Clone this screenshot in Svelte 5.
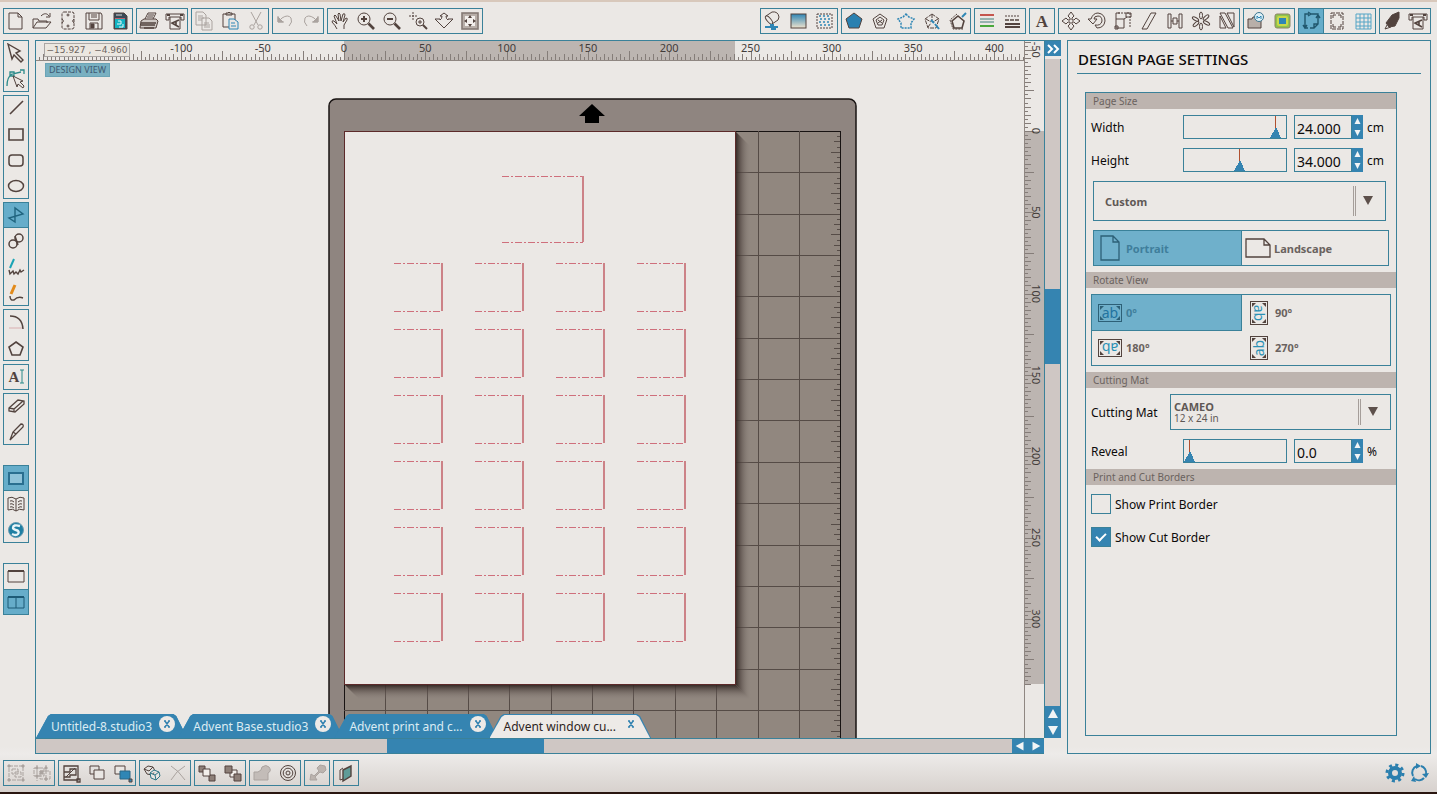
<script lang="ts">
  type Tool = { icon: string; label: string; active?: boolean; disabled?: boolean };

  const on = (icon: string, label: string): Tool => ({ icon, label, active: true });
  const off = (icon: string, label: string): Tool => ({ icon, label, disabled: true });
  const tool = (icon: string, label: string): Tool => ({ icon, label });

  const fileTools: Tool[][] = [
    [tool("page", "New"), tool("folder", "Open"), tool("card", "Import"), tool("floppy", "Save"), tool("sd", "Save to library")],
    [tool("printer", "Print"), tool("cutter", "Send to cutter")],
    [off("copy", "Copy"), tool("paste", "Paste"), off("scissors", "Cut")],
    [off("undo", "Undo"), off("redo", "Redo")],
    [tool("hand", "Pan"), tool("zoomIn", "Zoom in"), tool("zoomOut", "Zoom out"), tool("zoomSel", "Zoom selection"), tool("dragZoom", "Drag zoom"), tool("fit", "Fit to page")],
  ];

  const styleTools: Tool[][] = [
    [tool("fill", "Fill color"), tool("gradient", "Fill gradient"), tool("pattern", "Fill pattern")],
    [tool("pentagon", "Line color"), tool("sketch", "Sketch"), tool("star", "Rhinestones"), tool("trace", "Trace"), tool("offsetPen", "Print and cut")],
    [tool("lineColor", "Line color"), tool("lineStyle", "Line style")],
    [tool("text", "Text style")],
    [tool("move", "Move"), tool("rotate", "Rotate"), tool("scale", "Scale"), tool("shear", "Shear"), tool("align", "Align"), tool("replicate", "Replicate"), tool("nest", "Nesting")],
    [tool("modify", "Modify"), tool("offset", "Offset")],
    [on("pageSetup", "Design page settings"), tool("regMarks", "Registration marks"), tool("grid", "Grid settings")],
    [tool("blade", "Cut settings"), tool("cutter", "Send to cutter")],
  ];

  const drawTools: Tool[][] = [
    [tool("select", "Select"), tool("editPoints", "Edit points")],
    [tool("line", "Line"), tool("rect", "Rectangle"), tool("roundRect", "Rounded rectangle"), tool("ellipse", "Ellipse")],
    [on("polygon", "Polygon"), tool("curve", "Curve"), tool("freehand", "Freehand"), tool("smooth", "Smooth freehand")],
    [tool("arc", "Arc"), tool("regular", "Regular polygon")],
    [tool("addText", "Text")],
    [tool("eraser", "Eraser"), tool("knife", "Knife")],
  ];
  const viewTools: Tool[] = [on("designView", "Design view"), tool("library", "Library"), tool("store", "Store")];
  const splitTools: Tool[] = [tool("single", "Single view"), on("split", "Split view")];

  const objectTools: Tool[][] = [
    [off("group", "Group"), off("ungroup", "Ungroup")],
    [tool("selectAll", "Select all"), tool("deselect", "Deselect"), tool("selectColor", "Select by color")],
    [tool("duplicate", "Duplicate"), off("remove", "Delete")],
    [tool("front", "Bring to front"), tool("back", "Send to back")],
    [off("weld", "Weld"), tool("rings", "Offset")],
    [off("pick", "Pick a color")],
    [tool("sheet", "Layers")],
  ];

  const B = "#2f86b5";
  const penta = "M10 2l8 6-3 9H5L2 8z";
  const lens = `<circle cx="8" cy="8" r="6"/><path stroke-width="2.600" d="M12.500 12.500l5.500 5.500"/>`;
  const icons: Record<string, string> = {
    page: `<path d="M3 2h9l4 4v12H3zM12 2v4h4"/>`,
    folder: `<path d="M1 17V8h5l1 2h8v2M1 17l4-6h14l-5 6zM9 5c3-3 6-3 8 0m1-3v4h-4"/>`,
    card: `<rect x="4" y="1" width="12" height="17" rx="2" stroke-dasharray="3 1"/><path d="M4 8q3 2 0 4m12-4q-3 2 0 4"/><circle cx="10" cy="4" r="1"/><circle cx="10" cy="15" r="1"/>`,
    floppy: `<path d="M2 2h15l1 2v14H2z"/><path d="M5 2v7h10V2M6 18v-6h8v6M7 4h6M7 6h6"/><path fill="currentColor" d="M7 13h3v4H7z"/>`,
    sd: `<path fill="#3a4a57" d="M4 2h10l3 3v13H4z"/><path stroke="#ddd" d="M7 3v2m2-2v2m2-2v2"/><path fill="#12b3c2" stroke="none" d="M5 8h10v9H5z"/><path fill="#c4606c" stroke="none" d="M5 7h10v1H5z"/><path stroke="#e9f6f7" d="M8 10h3v3H7m2 3h4v-3"/>`,
    printer: `<path d="M6 8l3-6h8l-3 6M9 4h6M8 6h6"/><path fill="#cfc9c5" d="M2 10l3-2h12l2 2-2 7H1z"/><path stroke-width="1.600" d="M2 12h15M2 14h14M5 17h10"/>`,
    cutter: `<path d="M1 3h18v6h-3V6H4v3H1zM5 6v12h10V6"/><path stroke-width="2" d="M2 4h3m10 0h3"/><path stroke-width="1.600" d="M14 9l-7 3 7 4m-3-5v3"/>`,
    copy: `<path d="M2 1h7l3 3v10H2zM8 7h7l3 3v9H8zM4 5h5M4 7h6M4 9h4M10 12h5M10 14h6M10 16h6"/>`,
    paste: `<path d="M3 3h12v13H3z"/><path fill="#b9b2ad" d="M6 4V2h2q1-2 2 0h2v2z"/><path stroke="${B}" fill="#e9e6e3" d="M9 8h5l4 3v7H9zM11 12h4M11 15h5"/>`,
    scissors: `<path d="M5 1l7 13M15 1L8 14"/><circle cx="6" cy="16" r="2.200"/><circle cx="14" cy="16" r="2.200"/>`,
    undo: `<path d="M3 5v6h6M3 11l4-4q6-4 9 0 2 4-2 8"/><path fill="currentColor" d="M3 6v5h5z"/>`,
    redo: `<path d="M17 5v6h-6M17 11l-4-4q-6-4-9 0-2 4 2 8"/><path fill="currentColor" d="M17 6v5h-5z"/>`,
    hand: `<path d="M7 18q-2-4-5-7 0-2 2-1l3 3-3-8q1-2 2 0l3 5-1-7q1-2 2 0l1 7 2-7q2-1 2 1l-2 7 3-4q2 0 1 2l-3 5v4"/>`,
    zoomIn: lens + `<path stroke-width="2" d="M5 8h6M8 5v6"/>`,
    zoomOut: lens + `<path stroke-width="2" d="M5 8h6"/>`,
    zoomSel: `<path stroke-dasharray="2 1" d="M5 1v8M1 5h8"/><circle cx="12" cy="11" r="4"/><path d="M10 11h4m-2-2v4"/><path stroke-width="2" d="M15 14l4 4"/>`,
    dragZoom: `<path d="M6 5l4-3 4 3h-2q0 3 2 4v-1h5l-9 9-9-9h5v1q2-1 2-4z"/>`,
    fit: `<rect x="2" y="2" width="16" height="16" fill="#b8afa9" stroke="#857a75" stroke-width="1.600"/><path fill="#f2efec" stroke="none" d="M5 5h10v10H5z"/><path fill="currentColor" stroke="none" d="M10 4l2 3H8zM10 16l2-3H8zM4 10l3-2v4zM16 10l-3-2v4z"/>`,
    fill: `<ellipse cx="6" cy="9" rx="2" ry="5" transform="rotate(-40 6 9)"/><path d="M3 5l6-4q6-1 7 5l-1 3-6 4"/><path stroke="${B}" stroke-width="2" d="M2 16h13M7 14h4M8 18h5"/>`,
    gradient: `<defs><linearGradient id="gr" x2="0" y2="1"><stop stop-color="#2f86b5"/><stop offset="1" stop-color="#efe3cd"/></linearGradient></defs><rect x="2" y="3" width="15" height="14" fill="url(#gr)"/>`,
    pattern: `<rect x="2" y="3" width="15" height="14" stroke-dasharray="2 1"/><path stroke="${B}" stroke-width="1.500" stroke-dasharray="2 2" d="M4 5h12M5 8h12M4 11h12M5 14h12"/>`,
    pentagon: `<path fill="#2a80b0" d="${penta}"/>`,
    sketch: `<path d="M10 3l7 5-3 9H6L3 8z"/><path d="M10 6l4 3-2 5H8L6 9zM8 9l4 3M12 9l-4 3"/>`,
    star: `<path stroke="${B}" stroke-width="1.500" stroke-dasharray="2 1" d="M10 3l3 3 5 2-3 4v5h-5-5v-5L2 8l5-2z"/>`,
    trace: `<path stroke-dasharray="4 1" d="M10 3l7 5-3 9H6L3 8zM10 3v6M4 8l5 3M16 8l-5 3M6 16l3-4"/><path stroke="${B}" stroke-width="2" d="M9 9l3 3m1 1l4 5"/>`,
    offsetPen: `<path stroke-width="1.600" d="M10 5l6 5-2 7H6L4 10z"/><path stroke-dasharray="2 1" d="M9 3L2 9l3 9h10"/><path stroke="${B}" stroke-width="2" d="M14 6l4-4"/>`,
    lineColor: `<path stroke="#c5564e" stroke-width="2" d="M3 4h14"/><path stroke="#427f79" d="M3 8h14M3 11h14"/><path stroke="#4aa83c" stroke-width="2" d="M3 15h14"/>`,
    lineStyle: `<path stroke-dasharray="2 1" d="M2 5h15"/><path stroke-width="1.600" stroke-dasharray="4 1" d="M2 9h15"/><path stroke-width="2" d="M2 13h15M2 16h15"/>`,
    text: `<text x="10" y="16" text-anchor="middle" font-size="17" font-weight="bold" font-family="Liberation Serif, serif" fill="currentColor" stroke="none">A</text>`,
    move: `<path d="M10 1l3 4-2 2v2h2l2-2 4 3-4 3-2-2h-2v2l2 2-3 4-3-4 2-2v-2H7l-2 2-4-3 4-3 2 2h2V7L7 5z"/>`,
    rotate: `<path d="M1 8h3q2-6 7-6 7 1 7 8-1 7-8 7l-2-3q6 1 7-4 0-5-4-5-4 0-4 3h3l-4 5z"/>`,
    scale: `<path stroke-dasharray="2 1" d="M5 2h12v15"/><path d="M3 8h8v9H3zM2 15h3v3H2zM13 2h5v4h-5zM11 8l3-2M3 8V2h4"/>`,
    shear: `<path d="M12 2h5L8 18H3z"/>`,
    align: `<path d="M3 3h3v14H3zM14 3h3v14h-3zM8 7h4v6H8zM6 10h2m4 0h2"/>`,
    replicate: `<ellipse cx="10" cy="4.500" rx="1.500" ry="3.500"/><ellipse cx="10" cy="15.500" rx="1.500" ry="3.500"/><ellipse cx="4.500" cy="8" rx="1.500" ry="3.500" transform="rotate(-60 4.500 8)"/><ellipse cx="15.500" cy="12" rx="1.500" ry="3.500" transform="rotate(-60 15.500 12)"/><ellipse cx="5" cy="13" rx="1.500" ry="3.500" transform="rotate(50 5 13)"/><ellipse cx="15" cy="6.500" rx="1.500" ry="3.500" transform="rotate(50 15 6.500)"/>`,
    nest: `<path d="M3 2h5l8 15h-5zM10 2h7v14zM3 5v12h6z"/>`,
    modify: `<path fill="#b8afa9" d="M2 8h4l1-2h3v3h5v8H2z"/><circle cx="13" cy="6" r="4.500" fill="#dff0f6" stroke="#3b7590"/><path stroke="${B}" d="M11 8V5l2 2 2-2v3"/>`,
    offset: `<rect x="3" y="3" width="15" height="14" rx="2" fill="#8fc44d" stroke="#8c8366"/><rect x="6" y="6" width="9" height="8" rx="1" fill="#2f86b5" stroke="#c9d84a" stroke-width="2"/>`,
    pageSetup: `<path stroke="#20576d" stroke-width="1.400" d="M8 3H4v14h3M10 3h7v10l-4 4H9M17 13h-4v4M7 1l3 2-3 2M15 7l2-3 2 3M2 14l2 3 2-3"/>`,
    regMarks: `<path d="M4 2h12v16H4z" stroke-dasharray="4 1"/><path d="M6 7V4h3M11 4h3v3M6 13v3h3M11 16h3v-3"/>`,
    grid: `<path stroke="#54a5c6" d="M3 3h15v15H3zM7 3v15M11 3v15M15 3v15M3 7h15M3 11h15M3 15h15"/>`,
    blade: `<path fill="currentColor" d="M4 12l6-8 7-3v6l-4 8-6 1z"/><path d="M5 14l-2 4 6-2"/>`,
    select: `<path stroke-width="1.400" d="M2 1l12 7-4 2 7 7-2 2-7-7-2 4z"/>`,
    editPoints: `<path stroke="#2b8a8a" stroke-width="1.300" d="M1 17q0-9 5-12l9-2M4 3h4v4H4zM14 1h4v4"/><path d="M7 7l10 5-3 1 4 4-1 2-5-4-1 3z"/>`,
    line: `<path stroke-width="1.600" d="M4 16L17 3"/>`,
    rect: `<path stroke-width="1.600" d="M3 5h14v11H3z"/>`,
    roundRect: `<rect x="3" y="5" width="14" height="11" rx="3" stroke-width="1.500"/>`,
    ellipse: `<ellipse cx="10" cy="10" rx="7.500" ry="5.500" stroke-width="1.500"/>`,
    polygon: `<path stroke="#20647f" stroke-width="1.400" d="M9 3v14l-6-4L17 9 9 3z"/>`,
    curve: `<circle cx="13" cy="7" r="4" stroke-width="1.500"/><circle cx="7" cy="13" r="4" stroke-width="1.500"/><path stroke-width="1.500" d="M9 5l3 9"/>`,
    freehand: `<path stroke="#1ba4b5" stroke-width="2" d="M8 2L4 11"/><path stroke-width="1.400" d="M3 13l1 4 3-3 1 3 2-2 2 2 2-4 1 2 3-2"/>`,
    smooth: `<path stroke="#e28a1a" stroke-width="3" d="M9 2L5 11"/><path stroke-width="1.400" d="M4 13q0 5 4 4 4-4 9-2"/>`,
    arc: `<path stroke-width="1.500" d="M4 4q12 0 13 13"/><path stroke="#d9aeb0" d="M3 16h13"/>`,
    regular: `<path stroke-width="1.600" d="M10 4l7 5-3 8H6L3 9z"/>`,
    addText: `<text x="8" y="15" text-anchor="middle" font-size="15" font-weight="bold" font-family="Liberation Serif, serif" fill="currentColor" stroke="none">A</text><path stroke="#2b8a8a" d="M14 3h4m-2 0v13m-2 0h4"/>`,
    eraser: `<path stroke-width="1.300" d="M3 12l9-8 6 1v3l-9 8-6-1zM3 12l5 1 9-8M8 13v3"/>`,
    knife: `<path stroke-width="1.300" d="M4 18l3-8 8-8q3 0 2 3l-7 7zM7 10l3 2"/>`,
    designView: `<rect x="3" y="5" width="14" height="11" fill="#8fc3d9" stroke="#2a6f90" stroke-width="2"/>`,
    library: `<path d="M10 5q-4-3-8-1v12q5-2 8 1 3-3 8-1V4q-4-2-8 1zM10 5v12M4 7q2-1 4 1M4 10q2-1 4 1M4 13q2-1 4 1M16 7q-2-1-4 1M16 10q-2-1-4 1M16 13q-2-1-4 1"/>`,
    store: `<circle cx="10" cy="10" r="7.500" fill="#1f7fa3" stroke="#6c9db2"/><path stroke="#e8f4f8" stroke-width="2.400" d="M14 6q-7-2-7 2 0 1 3 2 4 1 2 4-2 2-6 0"/>`,
    single: `<path d="M2 5h16v11H2z"/><path stroke-width="2" d="M2 5h16"/>`,
    split: `<path stroke="#1d5b77" d="M2 5h16v11H2zM10 5v11"/><path stroke="#1d5b77" stroke-width="2" d="M2 5h16"/>`,
    group: `<path d="M3 3h14v14H3zM6 6h6v5H6zM9 9h6v5H9z" stroke-dasharray="4 1"/><path fill="currentColor" d="M2 2h2v2H2zM16 2h2v2h-2zM2 16h2v2H2zM16 16h2v2h-2z"/>`,
    ungroup: `<path d="M2 5h10v8H2zM8 8h10v8H8zM5 2v16M14 2v16" stroke-dasharray="4 1"/><path fill="currentColor" d="M4 4h2v2H4zM13 4h2v2h-2zM4 12h2v2H4zM13 15h2v2h-2zM8 8h3v3H8z"/>`,
    selectAll: `<path stroke-width="1.300" d="M3 3h14v14H3zM3 9h6V6h6v6H9v2H3zM16 16h3v3h-3z"/><path d="M5 14l9-9"/>`,
    deselect: `<path d="M3 3h9v8H3z"/><path fill="#e9e6e3" d="M7 7h10v9H7z"/>`,
    selectColor: `<path fill="#e9e6e3" d="M2 3h10v8H2z"/><path fill="#2f86b5" stroke="#2a6785" d="M7 8h10v8H7z"/><path fill="#2f86b5" d="M16 16h3v3h-3z"/>`,
    duplicate: `<path d="M2 6l4-3 5 1 2 4-3 4-5-1z"/><path d="M2 6l5 2 4-4"/><path stroke="#2c7585" fill="#e9e6e3" d="M8 10l4-3 5 2 1 4-4 4-5-2zM8 10l5 2 4-3m-4 3l1 5"/>`,
    remove: `<path d="M3 3q7 4 14 14M17 3Q8 8 3 17"/>`,
    front: `<path fill="#8d7f78" d="M2 3h6v6H2zM12 12h6v6h-6z"/><path fill="#f3efeb" d="M6 6h7v7H6z"/>`,
    back: `<path fill="#f3efeb" d="M7 7h7v7H7z"/><path fill="#8d7f78" d="M2 3h7v7H2zM11 11h7v7h-7z"/>`,
    weld: `<path fill="#c3bcb8" d="M2 9h4l3-2 1-3q4-3 7 0 3 4-1 6v7H2z"/>`,
    rings: `<circle cx="10" cy="10" r="7.500"/><circle cx="10" cy="10" r="4.800"/><circle cx="10" cy="10" r="2"/>`,
    pick: `<path fill="#bcb4af" d="M3 17l1-6 3 2 5-5-2-3 3-3 5 1 1 4-3 3-3-1-5 5 2 3z"/>`,
    sheet: `<path fill="#5f9c98" stroke-width="1.400" d="M7 7l8-4v10l-8 5z"/><path d="M7 5L4 7v10l3-1"/>`,
  };

  // 1 mm on the ruler is 1.626 px at this zoom level
  const SCALE = 1.626;
  const INCH = 41.35;
  const PAGE_W = 391;
  const PAGE_H = 553;

  function ticks(from: number, to: number) {
    const list = [];
    for (let u = from; u <= to; u += 2.5) {
      list.push({ at: Math.round(u * SCALE), len: u % 25 === 0 ? 9 : u % 5 === 0 ? 6 : 3 });
    }
    return list;
  }

  const hTicks = ticks(-190, 420);
  const vTicks = ticks(-55, 340);
  const hLabels = [-100, -50, 0, 50, 100, 150, 200, 250, 300, 350, 400];
  const vLabels = [-50, 0, 50, 100, 150, 200, 250, 300];

  const gridLines = Array.from({ length: 15 }, (_, i) => Math.round((i + 1) * INCH));
  const matTicks = Array.from({ length: 120 }, (_, i) => ({
    at: Math.round(((i + 1) * INCH) / 8),
    len: i % 4 === 3 ? 9 : i % 2 === 1 ? 6 : 3,
  }));

  const flaps = [{ x: 158, y: 45, w: 81, h: 66 }];
  for (let row = 0; row < 6; row++) {
    for (let col = 0; col < 4; col++) {
      flaps.push({ x: 50 + col * 81, y: 132 + row * 66, w: 48, h: 48 });
    }
  }

  const tabs = ["Untitled-8.studio3", "Advent Base.studio3", "Advent print and c...", "Advent window cu..."];
  let activeTab = $state(3);

  let width = $state(94);
  let height = $state(55);
  let reveal = $state(0);
  let orientation = $state("Portrait");
  let rotation = $state(0);
  let printBorder = $state(false);
  let cutBorder = $state(true);
</script>

{#snippet toolGroup(tools: Tool[])}
  <div class="group">
    {#each tools as t}
      <button class="tool" class:active={t.active} disabled={t.disabled} aria-label={t.label}>
        <svg viewBox="0 0 20 20" width="20" height="20">{@html icons[t.icon]}</svg>
      </button>
    {/each}
  </div>
{/snippet}

{#snippet spinner(name: string)}
  <span class="spinner">
    <button aria-label="Increase {name}"><svg viewBox="0 0 10 10"><path d="M5 2l3 6H2z" /></svg></button>
    <button aria-label="Decrease {name}"><svg viewBox="0 0 10 10"><path d="M5 8l3-6H2z" /></svg></button>
  </span>
{/snippet}

<div class="app">
  <header>
    <div class="bar">
      {#each fileTools as tools}{@render toolGroup(tools)}{/each}
    </div>
    <div class="bar">
      {#each styleTools as tools}{@render toolGroup(tools)}{/each}
    </div>
  </header>

  <main>
    <nav class="rail">
      {#each drawTools as tools}{@render toolGroup(tools)}{/each}
      <div class="rail-part">{@render toolGroup(viewTools)}</div>
      <div class="rail-part">{@render toolGroup(splitTools)}</div>
    </nav>

    <section class="workspace">
      <div class="ruler-h">
        <svg width="100%" height="100%">
          <g transform="translate(308 0)">
            <rect class="extent" x="0" y="0" width={PAGE_W} height="20" />
            {#each hTicks as t}
              <path class="tick" d="M{t.at} 19v-{t.len}" />
            {/each}
            {#each hLabels as n}
              <text x={n * SCALE} y="11">{n}</text>
            {/each}
          </g>
        </svg>
        <output class="coords">−15.927 , −4.960</output>
      </div>

      <div class="ruler-v">
        <svg width="100%" height="100%">
          <g transform="translate(0 90)">
            <rect class="extent" x="0" y="0" width="20" height={PAGE_H} />
            {#each vTicks as t}
              <path class="tick" d="M0 {t.at}h{t.len}" />
            {/each}
            {#each vLabels as n}
              <text transform="translate(7 {n * SCALE}) rotate(90)">{n}</text>
            {/each}
          </g>
        </svg>
      </div>

      <div class="stage">
        <svg width="100%" height="100%">
          <defs>
            <linearGradient id="shade-r"><stop stop-color="#2c201c" /><stop offset="1" stop-color="#8f8580" stop-opacity="0" /></linearGradient>
            <linearGradient id="shade-b" x2="0" y2="1"><stop stop-color="#2c201c" /><stop offset="1" stop-color="#8f8580" stop-opacity="0" /></linearGradient>
          </defs>
          <g transform="translate(308 70)">
            <rect class="mat" x="-15" y="-32" width="527" height="3000" rx="7" />
            <path class="feed" d="M248 -27l13 12h-6v7h-14v-7h-6z" />
            <rect class="mat-area" x="0" y="0" width="496" height="3000" />
            {#each gridLines as at}
              {#if at < 490}<path class="mat-line" d="M{at} 0V3000" />{/if}
              <path class="mat-line" d="M0 {at}H496" />
            {/each}
            {#each matTicks as t}
              <path class="mat-tick" d="M496 {t.at}h-{t.len}" />
            {/each}
            <path class="shade" fill="url(#shade-r)" d="M391 0l16 16v553l-16-16z" />
            <path class="shade" fill="url(#shade-b)" d="M0 553l16 16h391l-16-16z" />
            <rect class="paper" x="0" y="0" width={PAGE_W} height={PAGE_H} />
            {#each flaps as f}
              <path class="fold" d="M{f.x} {f.y}h{f.w}M{f.x} {f.y + f.h}h{f.w}" />
              <path class="cut" d="M{f.x + f.w} {f.y}v{f.h}" />
            {/each}
          </g>
        </svg>
        <span class="badge">DESIGN VIEW</span>
        <div class="tabs">
          {#each tabs as name, i}
            <div class="tab" class:current={i === activeTab}>
              <button class="name" onclick={() => (activeTab = i)}>{name}</button>
              <button class="close" aria-label="Close {name}">
                <svg viewBox="0 0 16 16" width="16" height="16"><path d="M6 5l4 6M10 5l-4 6M5 5h2m2 0h2M5 11h2m2 0h2" /></svg>
              </button>
            </div>
          {/each}
        </div>
      </div>

      <div class="scroll-v">
        <button class="collapse" aria-label="Collapse panel">
          <svg viewBox="0 0 16 16" width="16" height="16"><path d="M3 4l4 4-4 4M9 4l4 4-4 4" /></svg>
        </button>
        <div class="track-v"><div class="thumb-v"></div></div>
        <button class="arrow" aria-label="Scroll up"><svg viewBox="0 0 16 16"><path d="M8 3l5 9H3z" /></svg></button>
        <button class="arrow" aria-label="Scroll down"><svg viewBox="0 0 16 16"><path d="M8 13l5-9H3z" /></svg></button>
      </div>

      <div class="scroll-h">
        <div class="track-h"><div class="thumb-h"></div></div>
        <button class="arrow" aria-label="Scroll left"><svg viewBox="0 0 16 16"><path d="M3 8l9-5v10z" /></svg></button>
        <button class="arrow" aria-label="Scroll right"><svg viewBox="0 0 16 16"><path d="M13 8L4 3v10z" /></svg></button>
      </div>
    </section>

    <aside class="panel">
      <h1>DESIGN PAGE SETTINGS</h1>
      <div class="settings">
        <h2>Page Size</h2>
        <div class="body">
          <div class="row">
            <label for="width">Width</label>
            <input type="range" aria-label="Width slider" bind:value={width} />
            <input id="width" type="text" value="24.000" />
            {@render spinner("width")}
            <span>cm</span>
          </div>
          <div class="row">
            <label for="height">Height</label>
            <input type="range" aria-label="Height slider" bind:value={height} />
            <input id="height" type="text" value="34.000" />
            {@render spinner("height")}
            <span>cm</span>
          </div>
          <div class="picker size">
            <select aria-label="Page size">
              <option>Custom</option>
            </select>
          </div>
          <div class="choices">
            <button class:chosen={orientation === "Portrait"} onclick={() => (orientation = "Portrait")}>
              <svg viewBox="0 0 20 26" width="20" height="26"><path d="M1 1h12l6 6v18H1zM13 1v6h6" /></svg>
              Portrait
            </button>
            <button class:chosen={orientation === "Landscape"} onclick={() => (orientation = "Landscape")}>
              <svg viewBox="0 0 26 20" width="26" height="20"><path d="M1 1h18l6 6v12H1zM19 1v6h6" /></svg>
              Landscape
            </button>
          </div>
        </div>

        <h2>Rotate View</h2>
        <div class="body">
          <div class="rotations">
            {#each [0, 90, 180, 270] as deg}
              <button class:chosen={rotation === deg} onclick={() => (rotation = deg)}>
                <svg viewBox="-12 -12 24 24" width="24" height="24">
                  <g transform="rotate({deg === 270 ? -90 : deg})">
                    <rect x="-11.500" y="-8.500" width="23" height="17" />
                    <path d="M-10 -3v-4h4zM10 -3v-4h-4zM-10 3v4h4zM10 3v4h-4z" />
                    <text y="5" text-anchor="middle">ab</text>
                  </g>
                </svg>
                {deg}°
              </button>
            {/each}
          </div>
        </div>

        <h2>Cutting Mat</h2>
        <div class="body">
          <div class="row mat-row">
            <label for="mat">Cutting Mat</label>
            <div class="picker machine">
              <select id="mat">
                <option>CAMEO</option>
              </select>
              <small>12 x 24 in</small>
            </div>
          </div>
          <div class="row">
            <label for="reveal">Reveal</label>
            <input type="range" aria-label="Reveal slider" bind:value={reveal} />
            <input id="reveal" type="text" value="0.0" />
            {@render spinner("reveal")}
            <span>%</span>
          </div>
        </div>

        <h2>Print and Cut Borders</h2>
        <div class="body checks">
          <label><input type="checkbox" bind:checked={printBorder} />Show Print Border</label>
          <label><input type="checkbox" bind:checked={cutBorder} />Show Cut Border</label>
        </div>
      </div>
    </aside>
  </main>

  <footer>
    <div class="bar">
      {#each objectTools as tools}{@render toolGroup(tools)}{/each}
    </div>
    <div class="prefs">
      <button aria-label="Preferences">
        <svg viewBox="0 0 20 20" width="20" height="20">
          <circle cx="10" cy="10" r="5" stroke-width="4" />
          <circle cx="10" cy="10" r="8" stroke-width="3" stroke-dasharray="3 3.283" />
        </svg>
      </button>
      <button aria-label="Sync">
        <svg viewBox="0 0 20 20" width="20" height="20">
          <path stroke-width="2" d="M4 13A7 7 0 0 1 8 3M12 3a7 7 0 0 1 5 8M15 15a7 7 0 0 1-9 1" />
          <path class="solid" d="M7 0l5 3-5 3zM20 10l-3 5-4-4zM7 19l-5-1 3-5z" />
        </svg>
      </button>
    </div>
  </footer>
</div>

<style>
  :global(body) {
    background: #ebe8e5;
  }

  .app {
    --line: #3a8199;
    --blue: #3584b1;
    --light-blue: #6fb0cb;
    --ink: #52433e;
    display: flex;
    flex-direction: column;
    height: 100vh;
    min-height: 720px;
    box-sizing: border-box;
    font-family: "Noto Sans", "Open Sans", sans-serif;
    font-size: 12px;
    color: #0c0a0a;
    background: linear-gradient(#ebe8e5 94%, #edebe9 95%, #d6d0cc);
  }

  button {
    padding: 0;
    border: 0;
    background: none;
    font: inherit;
    color: inherit;
    cursor: pointer;
  }

  svg {
    display: block;
    fill: none;
    stroke: currentColor;
  }

  /* toolbars */
  header {
    display: flex;
    justify-content: space-between;
    padding: 6px 6px 6px 3px;
    border-top: 2px solid #d8c8bb;
  }

  .bar {
    display: flex;
    gap: 3px;
  }

  .group {
    display: flex;
    outline: 1px solid var(--line);
    outline-offset: -1px;
  }

  .tool {
    display: flex;
    align-items: center;
    justify-content: center;
    width: 26px;
    height: 26px;
    color: var(--ink);
  }

  .tool.active {
    background: #66adca;
    outline: 1px solid var(--line);
    outline-offset: -1px;
  }

  .tool:disabled {
    color: #aaa39f;
    cursor: default;
  }

  main {
    display: flex;
    flex: 1;
    min-height: 0;
    padding-right: 6px;
  }

  .rail {
    display: flex;
    flex-direction: column;
    gap: 3px;
    width: 26px;
    padding: 0 6px 0 3px;
  }

  .rail .group {
    flex-direction: column;
  }

  .rail-part {
    margin-top: 17px;
  }

  /* workspace */
  .workspace {
    flex: 1;
    min-width: 0;
    display: grid;
    grid-template-columns: 1fr 20px 17px;
    grid-template-rows: 20px 1fr 16px;
    border-left: 1px solid var(--line);
    border-top: 1px solid var(--line);
    margin-right: 6px;
  }

  .ruler-h {
    position: relative;
    border-bottom: 1px solid #8f8782;
    box-sizing: border-box;
    min-width: 0;
    overflow: hidden;
  }

  .ruler-v {
    grid-row: 1 / 3;
    grid-column: 2;
    border-left: 1px solid #8f8782;
    min-height: 0;
    overflow: hidden;
  }

  .ruler-h text,
  .ruler-v text {
    font-size: 11px;
    fill: #423c3a;
    stroke: none;
    text-anchor: middle;
  }

  .extent {
    fill: #bcb5b1;
    stroke: none;
  }

  .tick {
    stroke: #857d79;
    shape-rendering: crispEdges;
  }

  .coords {
    position: absolute;
    left: 8px;
    top: 2px;
    width: 84px;
    height: 12px;
    border: 1px solid #aaa6a4;
    background: #ebe7e0;
    color: #6d6560;
    font-family: "DejaVu Sans", sans-serif;
    font-size: 9px;
    line-height: 13px;
    text-align: center;
    white-space: nowrap;
  }

  .stage {
    grid-column: 1;
    grid-row: 2;
    position: relative;
    min-width: 0;
    min-height: 0;
    overflow: hidden;
  }

  .stage > svg {
    position: absolute;
    inset: 0;
  }

  .mat {
    fill: #8f8580;
    stroke: #181312;
    stroke-width: 1.5;
  }

  .mat-area {
    fill: #91877f;
    stroke: #181312;
    shape-rendering: crispEdges;
  }

  .mat-line {
    stroke: #554b46;
    shape-rendering: crispEdges;
  }

  .mat-tick {
    stroke: #564c47;
    shape-rendering: crispEdges;
  }

  .feed {
    fill: #000;
    stroke: none;
  }

  .shade {
    stroke: none;
  }

  .paper {
    fill: #ebe8e5;
    stroke: #5c2a2a;
    shape-rendering: crispEdges;
  }

  .fold {
    stroke: #cf6f7c;
    stroke-dasharray: 7 2 2 2;
    shape-rendering: crispEdges;
  }

  .cut {
    stroke: #cc8287;
    stroke-width: 2;
    shape-rendering: crispEdges;
  }

  .badge {
    position: absolute;
    left: 9px;
    top: 2px;
    padding: 0 3px;
    border: 1px solid #6aa4b6;
    background: #79b0c1;
    color: #3f5a72;
    font-size: 9px;
    line-height: 12px;
  }

  .tabs {
    position: absolute;
    left: 0;
    bottom: 0;
    display: flex;
  }

  .tab {
    position: relative;
    display: flex;
    align-items: center;
    gap: 7px;
    height: 24px;
    padding: 0 12px 0 15px;
    margin-right: -9px;
    color: #dcecf3;
  }

  .tab::before,
  .tab::after {
    content: "";
    position: absolute;
    inset: 0;
    background: var(--blue);
    clip-path: polygon(0 100%, 12px 2px, 15px 0, calc(100% - 14px) 0, calc(100% - 11px) 2px, 100% 100%);
  }

  .tab.current::after {
    inset: 1px 1px 0;
    background: #edeae7;
  }

  .tab.current {
    color: #2d2422;
  }

  .tab button {
    position: relative;
    z-index: 1;
    white-space: nowrap;
  }

  .close {
    width: 16px;
    height: 16px;
    margin-bottom: 4px;
    border-radius: 50%;
    background: #edeae7;
    color: var(--blue);
  }

  .close path {
    stroke-width: 1.5;
  }

  /* scroll bars */
  .scroll-v {
    grid-column: 3;
    grid-row: 1 / 3;
    display: flex;
    flex-direction: column;
    border-left: 1px solid var(--line);
  }

  .collapse {
    height: 15px;
    background: var(--blue);
    color: #fff;
  }

  .collapse path {
    stroke-width: 2;
  }

  .track-v {
    flex: 1;
    margin-top: 3px;
    background: #cfc7c4;
    border-right: 1px solid var(--line);
    display: flex;
    flex-direction: column;
  }

  .track-v::before {
    content: "";
    flex: 230;
  }

  .track-v::after {
    content: "";
    flex: 343;
  }

  .thumb-v {
    flex: 75;
    background: var(--blue);
  }

  .scroll-h {
    grid-column: 1 / 3;
    grid-row: 3;
    display: flex;
    box-sizing: border-box;
    border-top: 1px solid var(--line);
    border-bottom: 1px solid var(--line);
  }

  .track-h {
    flex: 1;
    background: #cfc7c4;
  }

  .thumb-h {
    width: 16%;
    height: 100%;
    margin-left: 36%;
    background: var(--blue);
  }

  .arrow {
    width: 16px;
    height: 16px;
    background: var(--blue);
  }

  .scroll-h .arrow {
    height: 14px;
  }

  .arrow svg {
    width: 100%;
    height: 100%;
    fill: #f2f5f6;
    stroke: none;
  }

  /* settings panel */
  .panel {
    width: 362px;
    display: flex;
    flex-direction: column;
    border: 1px solid var(--line);
  }

  h1 {
    margin: 0 9px;
    font-size: 15px;
    font-weight: 500;
    line-height: 37px;
    height: 32px;
    padding-left: 1px;
    border-bottom: 1px solid var(--line);
  }

  .settings {
    flex: 1;
    margin: 18px 33px 17px 17px;
    border: 1px solid var(--line);
  }

  h2 {
    margin: 0;
    padding: 0 7px;
    font-size: 10px;
    font-weight: 400;
    line-height: 16px;
    background: #bdb4af;
    color: #6a625e;
  }

  .body {
    display: flex;
    flex-direction: column;
    gap: 9px;
    padding: 6px 5px;
  }

  .row {
    display: flex;
    align-items: center;
    height: 24px;
  }

  .row label {
    width: 92px;
  }

  .row input {
    box-sizing: border-box;
    margin: 0;
    height: 24px;
    border: 1px solid var(--line);
    border-radius: 0;
    background: transparent;
  }

  .row input[type="text"] {
    width: 58px;
    padding: 3px 2px 0;
    font: inherit;
    font-size: 14px;
    color: inherit;
  }

  .row input[type="range"] {
    appearance: none;
    width: 104px;
    margin-right: 7px;
  }

  input[type="range"]::-webkit-slider-thumb {
    appearance: none;
    width: 11px;
    height: 22px;
    background:
      linear-gradient(to bottom right, transparent 50%, #3584b1 50%) left bottom / 6px 11px no-repeat,
      linear-gradient(to bottom left, transparent 50%, #3584b1 50%) right bottom / 5px 11px no-repeat,
      linear-gradient(#b0502f, #b0502f) center top / 1px 12px no-repeat;
  }

  .spinner {
    display: flex;
    flex-direction: column;
    width: 11px;
    height: 24px;
    margin-right: 4px;
    background: var(--blue);
  }

  .spinner button {
    flex: 1;
  }

  .spinner svg {
    width: 11px;
    height: 10px;
    fill: #f2f5f6;
    stroke: none;
  }

  .picker {
    position: relative;
    border: 1px solid var(--line);
  }

  .picker select {
    appearance: none;
    width: 100%;
    height: 100%;
    border: 0;
    background: none;
    font: inherit;
    font-size: 11px;
    font-weight: 700;
    color: #5f5855;
  }

  .picker::before {
    content: "";
    position: absolute;
    right: 29px;
    top: 4px;
    bottom: 4px;
    width: 1px;
    border: solid #a59e9a;
    border-width: 0 1px;
  }

  .picker::after {
    content: "";
    position: absolute;
    right: 12px;
    top: calc(50% - 5px);
    border: solid transparent;
    border-width: 9px 5px 0;
    border-top-color: #5d504b;
  }

  .size {
    height: 38px;
    margin: 0 5px 0 2px;
  }

  .size select {
    padding: 0 11px;
  }

  .machine {
    flex: 1;
    height: 34px;
  }

  .machine select {
    padding: 0 3px 12px;
  }

  .machine small {
    position: absolute;
    left: 3px;
    top: 16px;
    font-size: 10px;
    line-height: 14px;
    color: #5f5855;
    pointer-events: none;
  }

  .row.mat-row {
    height: 36px;
  }

  .mat-row label {
    width: 79px;
  }

  .choices,
  .rotations {
    display: grid;
    grid-template-columns: 1fr 1fr;
    border: 1px solid var(--line);
    font-size: 11px;
    font-weight: 700;
    color: #6a625e;
  }

  .choices {
    margin: 0 2px;
  }

  .choices button,
  .rotations button {
    display: flex;
    align-items: center;
    gap: 6px;
    height: 34px;
    padding: 0 6px;
  }

  .rotations button {
    height: 35px;
    gap: 4px;
  }

  .choices button:last-child {
    gap: 3px;
    padding: 0 4px;
  }

  .chosen {
    background: var(--light-blue);
    color: #3f7e9b;
    box-shadow: 0 0 0 1px var(--line);
  }

  .choices svg {
    color: var(--ink);
    stroke-width: 1.3;
  }

  .rotations svg {
    color: var(--ink);
  }

  .rotations svg path {
    fill: currentColor;
    stroke: none;
  }

  .rotations svg text {
    font-size: 14px;
    font-weight: 400;
    fill: #2a91b5;
    stroke: none;
  }

  .choices .chosen svg,
  .rotations .chosen svg {
    color: #2d6077;
  }

  .rotations .chosen svg text {
    fill: #2273a0;
  }

  .body.checks {
    gap: 13px;
    padding-top: 9px;
  }

  .checks label {
    display: flex;
    align-items: center;
    gap: 4px;
    height: 20px;
  }

  .checks input {
    appearance: none;
    width: 20px;
    height: 20px;
    margin: 0;
    border: 1px solid var(--line);
    display: grid;
    place-items: center;
  }

  .checks input:checked {
    background: var(--blue);
  }

  .checks input:checked::before {
    content: "";
    width: 8px;
    height: 4px;
    margin-bottom: 3px;
    border: solid #fff;
    border-width: 0 0 2px 2px;
    transform: rotate(-45deg);
  }

  footer {
    display: flex;
    justify-content: space-between;
    padding: 6px 8px 6px 3px;
    border-bottom: 2px solid #2a1610;
  }

  .prefs {
    display: flex;
    align-items: center;
    gap: 4px;
    color: #2b7fae;
  }

  .prefs .solid {
    fill: currentColor;
    stroke: none;
  }
</style>
